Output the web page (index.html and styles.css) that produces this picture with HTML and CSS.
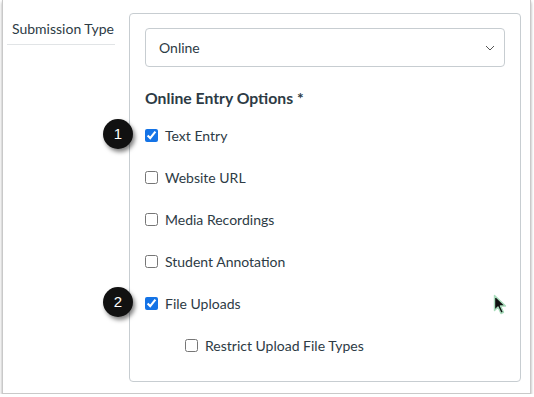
FILE: index.html
```html
<!DOCTYPE html>
<html lang="en">
<head>
  <meta charset="UTF-8" />
  <title>Submission Type</title>
  <link rel="stylesheet" href="styles.css">
</head>
<body>

<div class="frame">
  <div class="field-label">Submission Type</div>

  <div class="card">
    <div class="select-box">
      <span>Online</span>
      <svg class="chevron" width="10" height="6" viewBox="0 0 10 6"><path d="M1 1l4 4 4-4" fill="none" stroke="#555" stroke-width="1"/></svg>
    </div>

    <div class="group-title">Online Entry Options *</div>

    <div class="options">
      <label class="option"><span class="badge">1</span><input type="checkbox" checked> Text Entry</label>
      <label class="option"><input type="checkbox"> Website URL</label>
      <label class="option"><input type="checkbox"> Media Recordings</label>
      <label class="option"><input type="checkbox"> Student Annotation</label>
      <label class="option"><span class="badge">2</span><input type="checkbox" checked> File Uploads</label>
      <label class="option sub"><input type="checkbox"> Restrict Upload File Types</label>
    </div>
  </div>

  <!-- mouse pointer from the screen capture -->
  <svg class="pointer" width="14" height="22" viewBox="0 0 14 22">
    <path d="M1.5 1.5v15l3.5-3.5 3 6.5 2.5-1.2-3-6.3h5z" fill="#111" stroke="#a9dcbc" stroke-width="1.4" stroke-linejoin="round"/>
  </svg>
</div>

</body>
</html>
```

FILE: styles.css
```css
body { margin: 0; background: #fff; font-family: Lato, "Open Sans", sans-serif; color: #2d3b45; }
.frame { position: relative; display: flex; align-items: flex-start; width: 529px; height: 394px; margin-left: 2px; box-sizing: border-box; border: 1px solid #c9c9c9; border-top: none; box-shadow: 0 2px 3px rgba(0,0,0,0.35); }
.field-label { flex: none; width: 108px; margin-left: 4px; padding: 19px 0 5px 5px; box-sizing: border-box; font-size: 14px; line-height: 20px; border-bottom: 1px solid #e1e4e6; }
.card { flex: none; width: 392px; height: 369px; margin: 13px 0 0 14px; padding: 14px 15px 0 15px; box-sizing: border-box; border: 1px solid #c7cdd1; border-radius: 4px; }
.select-box { display: flex; align-items: center; justify-content: space-between; height: 39px; padding: 0 9px 0 13px; box-sizing: border-box; border: 1px solid #c7cdd1; border-radius: 4px; font-size: 14px; }
.chevron { margin-top: 1px; }
.group-title { margin-top: 21px; font-size: 15.75px; font-weight: bold; line-height: 20px; }
.options { display: flex; flex-direction: column; margin-top: 6px; }
.option { position: relative; display: flex; align-items: center; gap: 7px; height: 42px; font-size: 14px; }
.option input { width: 13px; height: 13px; margin: 0; accent-color: #1473e6; }
.option.sub { padding-left: 40px; }
.badge { position: absolute; left: -42px; top: 5px; width: 30px; height: 30px; border-radius: 50%; background: #111; color: #fff; font-family: "Liberation Sans", Arial, sans-serif; font-size: 15px; line-height: 30px; text-align: center; box-shadow: 2px 3px 4px rgba(0,0,0,0.5); }
.pointer { position: absolute; left: 490px; top: 294px; }
```
